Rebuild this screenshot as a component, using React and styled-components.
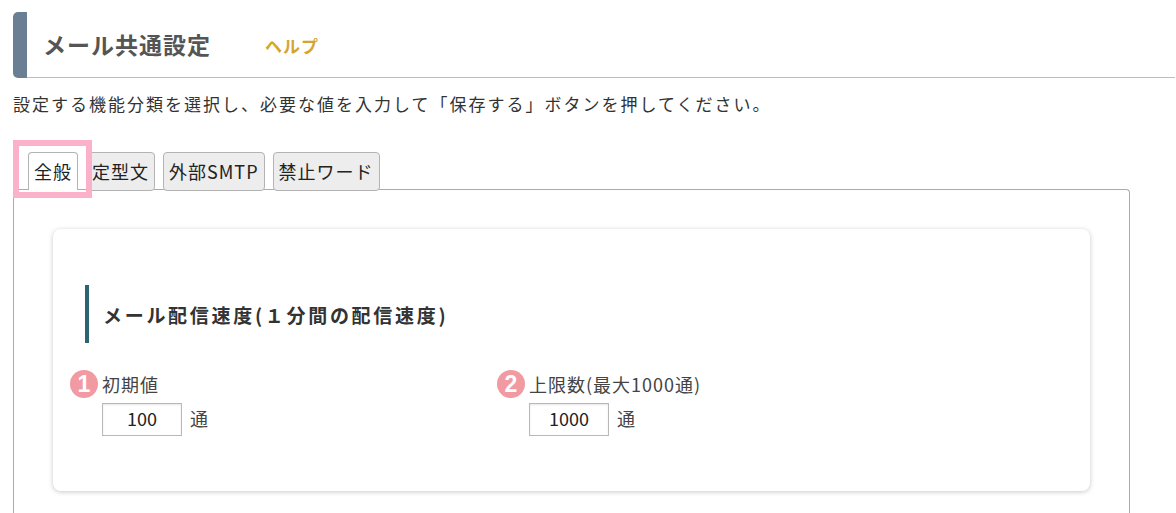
import React from "react";
import styled, { createGlobalStyle } from "styled-components";

const Global = createGlobalStyle`
  html, body { margin: 0; padding: 0; background: #fff; }
  body { font-family: "Noto Sans CJK JP", "Noto Sans", sans-serif; color: #333; }
  * { box-sizing: border-box; }
`;

const Page = styled.div`
  padding: 12px 1px 0 13px;
`;

const Header = styled.header`
  display: flex;
  height: 66px;
`;

const HeaderBar = styled.div`
  width: 14px;
  background: #6a7f93;
  border-radius: 5px 0 0 5px;
`;

const HeaderBody = styled.div`
  flex: 1;
  display: flex;
  align-items: center;
  border-bottom: 1px solid #bdbdbd;
  padding-left: 16px;
`;

const Title = styled.h1`
  margin: 0;
  font-size: 23px;
  font-weight: 700;
  letter-spacing: 1px;
  color: #555;
  line-height: 1;
`;

const HelpLink = styled.a`
  margin-left: 54px;
  margin-top: 2px;
  font-size: 17px;
  font-weight: 700;
  letter-spacing: 1px;
  color: #d4a52f;
  text-decoration: none;
`;

const Description = styled.p`
  margin: 14px 0 0;
  font-size: 17px;
  line-height: 24px;
  letter-spacing: 2px;
  color: #333;
`;

const TabsArea = styled.div`
  position: relative;
  margin-top: 36px;
`;

const TabList = styled.div`
  position: relative;
  z-index: 1;
  display: flex;
  align-items: flex-start;
  gap: 8px;
  padding-left: 15px;
  margin-bottom: -2px;
  height: 39px;
`;

const Tab = styled.div`
  height: ${(p) => (p.$active ? "38px" : "39px")};
  padding: 0 5px;
  border: 1px solid #b3b3b3;
  border-bottom: ${(p) => (p.$active ? "none" : "1px solid #b3b3b3")};
  border-radius: ${(p) => (p.$active ? "4px 4px 0 0" : "4px")};
  background: ${(p) => (p.$active ? "#fff" : "#ededed")};
  font-size: 18px;
  letter-spacing: 1px;
  line-height: 36px;
  color: #222;
  white-space: nowrap;
`;

const Highlight = styled.div`
  position: absolute;
  z-index: 2;
  left: 0;
  top: -12px;
  width: 79px;
  height: 58px;
  border: 6px solid #fbb1ca;
  pointer-events: none;
`;

const Panel = styled.section`
  width: 1117px;
  border: 1px solid #ababab;
  border-bottom: none;
  border-radius: 0 4px 0 0;
  padding: 39px 39px 40px;
`;

const Card = styled.div`
  background: #fff;
  border-radius: 8px;
  box-shadow: 0 1px 5px rgba(0, 0, 0, 0.22);
  padding: 56px 32px 55px;
`;

const SectionHeading = styled.h2`
  margin: 0;
  height: 58px;
  display: flex;
  align-items: center;
  border-left: 4px solid #2b6670;
  padding-left: 14px;
  font-size: 19px;
  font-weight: 700;
  letter-spacing: 2.7px;
  color: #333;
`;

const Fields = styled.div`
  display: flex;
  margin: 27px 0 0 -15px;
`;

const Field = styled.div`
  width: 427px;
`;

const LabelRow = styled.div`
  display: flex;
  align-items: center;
  gap: 4px;
  height: 28px;
`;

const Badge = styled.span`
  width: 28px;
  height: 28px;
  border-radius: 50%;
  background: #f19aa2;
  color: #fff;
  font-size: 23px;
  font-weight: 700;
  line-height: 28px;
  text-align: center;
  font-family: "Liberation Sans", "Noto Sans", sans-serif;
`;

const Label = styled.span`
  font-size: 18px;
  letter-spacing: 1px;
  color: #444;
`;

const InputRow = styled.div`
  display: flex;
  align-items: center;
  gap: 8px;
  margin: 5px 0 0 32px;
`;

const NumberInput = styled.input`
  width: 80px;
  height: 33px;
  border: 1px solid #b8b8b8;
  box-shadow: inset 0 1px 2px rgba(0, 0, 0, 0.1);
  text-align: center;
  font-family: "Noto Sans CJK JP", "Noto Sans", sans-serif;
  font-size: 18px;
  color: #222;
  padding: 0 0 3px;
  outline: none;
`;

const Unit = styled.span`
  font-size: 18px;
  color: #444;
  margin-top: -3px;
`;

const tabs = ["全般", "定型文", "外部SMTP", "禁止ワード"];

const fields = [
  { n: "1", label: "初期値", value: "100" },
  { n: "2", label: "上限数(最大1000通)", value: "1000" },
];

export default function App() {
  return (
    <>
      <Global />
      <Page>
        <Header>
          <HeaderBar />
          <HeaderBody>
            <Title>メール共通設定</Title>
            <HelpLink href="#">ヘルプ</HelpLink>
          </HeaderBody>
        </Header>
        <Description>
          設定する機能分類を選択し、必要な値を入力して「保存する」ボタンを押してください。
        </Description>
        <TabsArea>
          <TabList>
            {tabs.map((t, i) => (
              <Tab key={t} $active={i === 0}>
                {t}
              </Tab>
            ))}
          </TabList>
          <Highlight />
          <Panel>
            <Card>
              <SectionHeading>メール配信速度(１分間の配信速度)</SectionHeading>
              <Fields>
                {fields.map((f) => (
                  <Field key={f.n}>
                    <LabelRow>
                      <Badge>{f.n}</Badge>
                      <Label>{f.label}</Label>
                    </LabelRow>
                    <InputRow>
                      <NumberInput readOnly defaultValue={f.value} />
                      <Unit>通</Unit>
                    </InputRow>
                  </Field>
                ))}
              </Fields>
            </Card>
          </Panel>
        </TabsArea>
      </Page>
    </>
  );
}
